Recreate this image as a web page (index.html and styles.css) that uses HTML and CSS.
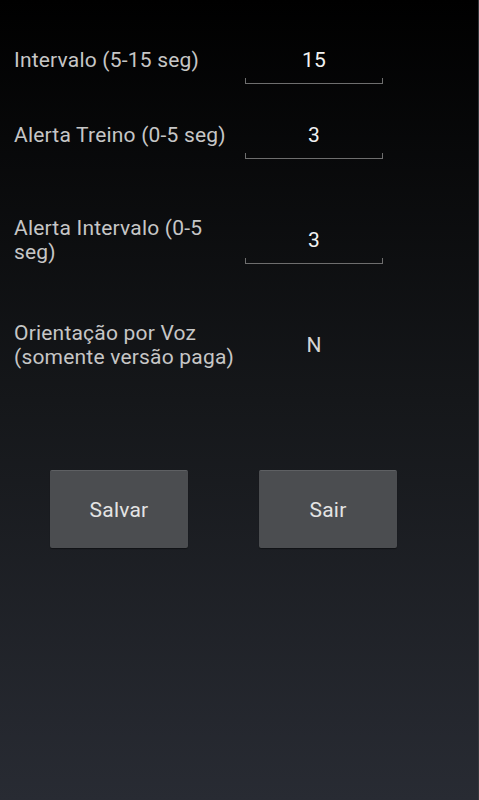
FILE: index.html
```html
<!DOCTYPE html>
<html lang="pt">
<head>
    <meta charset="UTF-8">
    <meta name="viewport" content="width=device-width, initial-scale=1.0">
    <title>Configurações</title>
    <link rel="stylesheet" href="styles.css">
</head>
<body>

<div id="screen">
    <div class="form">
        <div class="row">
            <span class="label">Intervalo (5-15 seg)</span>
            <div class="field">
                <span class="value">15</span>
                <span class="underline"></span>
            </div>
        </div>

        <div class="row">
            <span class="label">Alerta Treino (0-5 seg)</span>
            <div class="field">
                <span class="value">3</span>
                <span class="underline"></span>
            </div>
        </div>

        <div class="row spaced">
            <span class="label">Alerta Intervalo (0-5 seg)</span>
            <div class="field">
                <span class="value">3</span>
                <span class="underline"></span>
            </div>
        </div>

        <div class="row spaced">
            <span class="label">Orientação por Voz (somente versão paga)</span>
            <div class="static-value">N</div>
        </div>
    </div>

    <div class="actions">
        <button>Salvar</button>
        <button>Sair</button>
    </div>
</div>

</body>
</html>
```

FILE: styles.css
```css
body {
    margin: 0;
    font-family: Roboto, 'Noto Sans', sans-serif;
    color: #c6c6c6;
    background: #000;
}

#screen {
    height: 800px;
    box-sizing: border-box;
    background: linear-gradient(180deg, #000 0%, #15171a 50%, #282b33 100%);
    border-right: 1px solid #34373c;
}

.form {
    padding: 36px 0 0 14px;
}

.row {
    display: flex;
    align-items: center;
    min-height: 48px;
    margin-top: 27px;
}

.row:first-child {
    margin-top: 0;
}

.row.spaced {
    margin-top: 57px;
}

.label {
    width: 231px;
    padding-right: 8px;
    box-sizing: border-box;
    font-size: 21px;
    letter-spacing: 0.2px;
    line-height: 24px;
}

.field {
    width: 138px;
    height: 48px;
    box-sizing: border-box;
    padding-top: 12px;
    display: flex;
    flex-direction: column;
    align-items: center;
}

.value {
    font-size: 21px;
    letter-spacing: 0.2px;
    line-height: 24px;
    color: #f2f2f2;
    margin-bottom: 6px;
}

.underline {
    width: 100%;
    height: 6px;
    box-sizing: border-box;
    border: 1px solid #6e6e6e;
    border-top: none;
}

.static-value {
    width: 138px;
    text-align: center;
    font-size: 21px;
    line-height: 24px;
    color: #d4d4d4;
}

.actions {
    display: flex;
    gap: 71px;
    padding-left: 50px;
    margin-top: 101px;
}

button {
    width: 138px;
    height: 78px;
    background: #4b4d50;
    border: none;
    border-top: 1px solid #5e6063;
    border-radius: 2px;
    box-shadow: 0 1px 1px rgba(0, 0, 0, 0.4);
    font-family: Roboto, 'Noto Sans', sans-serif;
    font-size: 21px;
    letter-spacing: 0.2px;
    color: #e4e4e4;
    padding: 0;
}
```
